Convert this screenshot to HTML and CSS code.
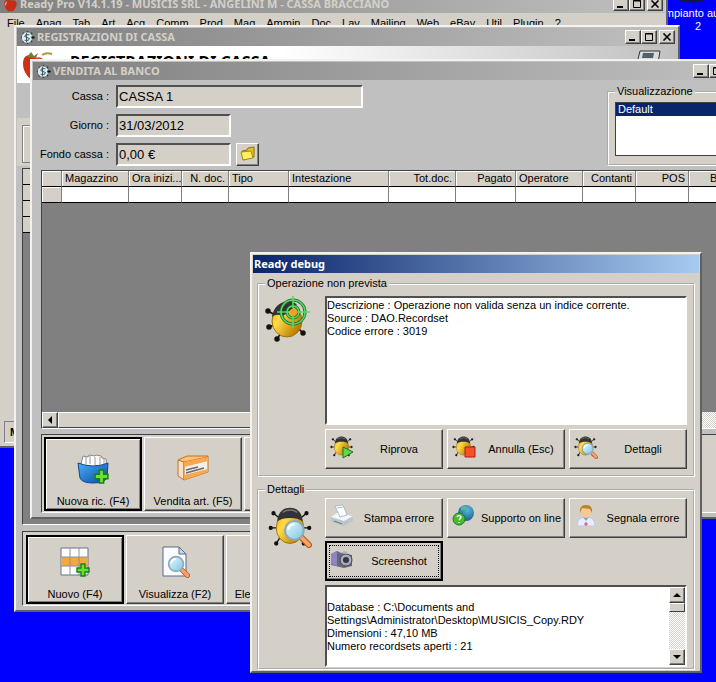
FILE: index.html
```html
<!DOCTYPE html>
<html lang="it">
<head>
  <meta charset="utf-8">
  <title>Ready Pro</title>
  <link rel="stylesheet" href="styles.css">
</head>
<body>
  <svg class="sprite" aria-hidden="true">
    <defs>
      <linearGradient id="shell" x1="0" y1="0" x2="1" y2="0.6">
        <stop offset="0" stop-color="#e8a808"/>
        <stop offset="0.35" stop-color="#ffdc48"/>
        <stop offset="1" stop-color="#b87800"/>
      </linearGradient>
      <linearGradient id="lens" x1="0" y1="0" x2="1" y2="1">
        <stop offset="0" stop-color="#e8faff"/>
        <stop offset="1" stop-color="#7cc4e4"/>
      </linearGradient>
      <linearGradient id="basket" x1="0" y1="0" x2="1" y2="1">
        <stop offset="0" stop-color="#4cb0f4"/>
        <stop offset="1" stop-color="#0448a8"/>
      </linearGradient>
      <radialGradient id="globe" cx="0.6" cy="0.3" r="0.8">
        <stop offset="0" stop-color="#58b8d8"/>
        <stop offset="1" stop-color="#10508c"/>
      </radialGradient>
    </defs>
    <symbol id="bug" viewBox="0 0 48 48">
      <g stroke="#111" stroke-width="1.5" fill="#111">
        <path d="M12 14L6 9M10 25H3M14 34L9 42M36 14L42 9M38 25H45M34 34L39 42" fill="none"/>
        <circle cx="6" cy="9" r="1.6"/><circle cx="3" cy="25" r="1.6"/><circle cx="9" cy="42" r="1.6"/>
        <circle cx="42" cy="9" r="1.6"/><circle cx="45" cy="25" r="1.6"/><circle cx="39" cy="42" r="1.6"/>
      </g>
      <ellipse cx="24" cy="25" rx="15" ry="17" fill="url(#shell)" stroke="#a07000"/>
      <path d="M10 18C11 7 17 3 24 3s13 4 14 15c-6-5-22-5-28 0z" fill="#333"/>
      <path d="M16 8q8-5 16 0" stroke="#777" stroke-width="1.5" fill="none"/>
    </symbol>
    <symbol id="glass" viewBox="0 0 28 28">
      <path d="M17 17L25 25" stroke="#b85818" stroke-width="6" stroke-linecap="round"/>
      <path d="M18 18L25 25" stroke="#f4a468" stroke-width="4" stroke-linecap="round"/>
      <circle cx="11" cy="11" r="9" fill="url(#lens)" stroke="#8fa8b4" stroke-width="2"/>
      <path d="M5 10a6 6 0 0 1 6-5" stroke="#fff" stroke-width="2" fill="none"/>
    </symbol>
    <symbol id="plus" viewBox="0 0 14 14">
      <path d="M5 1h4v4h4v4H9v4H5V9H1V5h4z" fill="#6ee030" stroke="#188018" stroke-width="1.4"/>
    </symbol>
    <symbol id="gear" viewBox="0 0 16 16">
      <path d="M8 1v14M1 8h15M3 3l10 10M13 3L3 13" stroke="#283c44" stroke-width="1.6"/>
      <circle cx="7.500" cy="8" r="5.500" fill="#dcf0f4"/>
      <path d="M10 5H6L5 7l5 2-1 2H5M7 3v10" fill="none" stroke="#384c54"/>
      <path d="M12 8h3" stroke="#111" stroke-width="2"/>
    </symbol>
    <symbol id="apple" viewBox="0 0 16 16">
      <path d="M8 4C2 1 0 6 2 10c2 5 4 6 6 5 2 1 4 0 6-5 2-5-1-8-6-6z" fill="#c82c18"/>
      <path d="M4 5q-2 2-1 4" stroke="#f09080" stroke-width="1.5" fill="none"/>
      <path d="M8 4q0-3 3-4" stroke="#486018" stroke-width="1.5" fill="none"/>
    </symbol>
    <symbol id="min" viewBox="0 0 10 8"><path d="M1 7h6" stroke="#000" stroke-width="2"/></symbol>
    <symbol id="max" viewBox="0 0 10 8"><path d="M1.500 0.500h7v7h-7zM1 1h8" fill="none" stroke="#000"/></symbol>
    <symbol id="close" viewBox="0 0 10 8"><path d="M1.500 0.500L8.500 7.500M8.500 0.500L1.500 7.500" stroke="#000" stroke-width="1.6"/></symbol>
  </svg>

  <div class="desktop">
    <div class="shortcut">
      <svg class="shortcut-icon" viewBox="0 0 32 12"><path d="M4 0h24v6q-12 3-24 0z" fill="#101840"/></svg>
      <span>mpianto au</span>
      <span>2</span>
    </div>

    <section class="window main-window">
      <header class="titlebar">
        <svg class="app-icon"><use href="#apple"/></svg>
        <h1 class="title">Ready Pro V14.1.19 - MUSICIS SRL - ANGELINI M - CASSA BRACCIANO</h1>
        <div class="window-buttons">
          <button aria-label="Riduci"><svg><use href="#min"/></svg></button>
          <button aria-label="Ingrandisci"><svg><use href="#max"/></svg></button>
          <button aria-label="Chiudi" class="close"><svg><use href="#close"/></svg></button>
        </div>
      </header>
      <nav class="menu">
        <a href="#">File</a><a href="#">Anag</a><a href="#">Tab</a><a href="#">Art</a><a href="#">Acq</a><a href="#">Comm</a><a href="#">Prod</a><a href="#">Mag</a><a href="#">Ammin</a><a href="#">Doc</a><a href="#">Lav</a><a href="#">Mailing</a><a href="#">Web</a><a href="#">eBay</a><a href="#">Util</a><a href="#">Plugin</a><a href="#">?</a>
      </nav>
      <footer class="statusbar">M</footer>
    </section>

    <section class="window register-window">
      <header class="titlebar">
        <svg class="app-icon"><use href="#gear"/></svg>
        <h2 class="title">REGISTRAZIONI DI CASSA</h2>
        <div class="window-buttons">
          <button aria-label="Riduci"><svg><use href="#min"/></svg></button>
          <button aria-label="Ingrandisci"><svg><use href="#max"/></svg></button>
          <button aria-label="Chiudi" class="close"><svg><use href="#close"/></svg></button>
        </div>
      </header>
      <div class="banner">
        <svg class="banner-logo" viewBox="0 0 32 32">
          <path d="M10 6C1 2-1 14 3 22c4 8 8 8 12 6V8z" fill="#cc3018"/>
          <path d="M13 8c8-3 12 4 10 12-2 8-8 12-14 9z" fill="#d85020"/>
          <path d="M5 7l4-5 3 4 4-3-2 5" fill="#708030"/>
          <path d="M20 5q4-3 10-1" stroke="#b09840" stroke-width="2" fill="none"/>
        </svg>
        <span class="banner-title">REGISTRAZIONI DI CASSA</span>
        <svg class="banner-register" viewBox="0 0 24 24">
          <path d="M3 1h20l-2 12H0z" fill="#d8dcdc" stroke="#333"/>
          <path d="M6 3h11l-1 5H5z" fill="#506068"/>
          <path d="M0 13h22v9H0z" fill="#999"/>
        </svg>
      </div>
      <div class="register-filter"><div class="filter-box"></div></div>
      <div class="register-grid">
        <div class="stub-row"></div><div class="stub-row"></div><div class="stub-row"></div><div class="stub-row"></div>
      </div>
      <div class="toolbar">
        <button class="tool default">
          <svg viewBox="0 0 32 32">
            <path d="M2 2h27v27H2z" fill="#fff" stroke="#667088"/>
            <path d="M2 11h27v9H2z" fill="#f8a838"/>
            <path d="M11 2v27M20 2v27M2 11h27M2 20h27" stroke="#8890a0"/>
            <use href="#plus" x="17" y="17" width="14" height="14"/>
          </svg>
          <span>Nuovo (F4)</span>
        </button>
        <button class="tool">
          <svg viewBox="0 0 32 32">
            <path d="M4 1h16l7 7v22H4z" fill="#fafcff" stroke="#56698c"/>
            <path d="M20 1v7h7z" fill="#c8d8ec" stroke="#56698c"/>
            <use href="#glass" x="8" y="9" width="23" height="23"/>
          </svg>
          <span>Visualizza (F2)</span>
        </button>
        <button class="tool"><span>Elenco mov (F3)</span></button>
      </div>
    </section>

    <section class="window sale-window">
      <header class="titlebar">
        <svg class="app-icon"><use href="#gear"/></svg>
        <h2 class="title">VENDITA AL BANCO</h2>
        <div class="window-buttons">
          <button aria-label="Riduci"><svg><use href="#min"/></svg></button>
          <button aria-label="Ingrandisci"><svg><use href="#max"/></svg></button>
          <button aria-label="Chiudi" class="close"><svg><use href="#close"/></svg></button>
        </div>
      </header>
      <div class="sale-head">
        <form class="sale-form">
          <label for="cassa">Cassa :</label>
          <input id="cassa" class="wide" type="text" value="CASSA 1">
          <label for="giorno">Giorno :</label>
          <input id="giorno" type="text" value="31/03/2012">
          <label for="fondo">Fondo cassa :</label>
          <div class="fund">
            <input id="fondo" type="text" value="0,00 €">
            <button type="button" class="folder" aria-label="Apri">
              <svg viewBox="0 0 16 16">
                <path d="M2 5l5-1 1-2 6-1v10L3 14z" fill="#e8c020" stroke="#907010"/>
                <path d="M1 6l10-1 2 7-10 2z" fill="#fff060" stroke="#a88818"/>
              </svg>
            </button>
          </div>
        </form>
        <fieldset class="group view-group">
          <legend>Visualizzazione</legend>
          <ul class="listbox"><li class="selected">Default</li></ul>
        </fieldset>
      </div>
      <div class="sale-grid">
        <table>
          <colgroup>
            <col class="w-mark"><col class="w-l"><col class="w-s"><col class="w-xs"><col class="w-m"><col class="w-xl"><col class="w-l"><col class="w-m"><col class="w-l"><col class="w-s"><col class="w-s"><col>
          </colgroup>
          <thead>
            <tr>
              <th></th><th>Magazzino</th><th>Ora inizi...</th><th class="num">N. doc.</th><th>Tipo</th><th>Intestazione</th><th class="num">Tot.doc.</th><th class="num">Pagato</th><th>Operatore</th><th class="num">Contanti</th><th class="num">POS</th><th class="num">Bonif</th>
            </tr>
          </thead>
          <tbody>
            <tr><th></th><td></td><td></td><td></td><td></td><td></td><td></td><td></td><td></td><td></td><td></td><td></td></tr>
          </tbody>
        </table>
        <div class="hscroll">
          <button aria-label="Scorri a sinistra"><svg viewBox="0 0 8 8"><path d="M6 0v8L2 4z"/></svg></button>
          <div class="thumb"></div>
          <div class="track"></div>
        </div>
      </div>
      <div class="toolbar">
        <button class="tool default">
          <svg viewBox="0 0 32 32">
            <path d="M4 11L6 3l5 1 1-2 6 1 1-1 5 1 1 2 4 1 1 8-14 4z" fill="#fff" stroke="#888"/>
            <path d="M9 4v8M13 3v8M18 4v8M23 4v8M27 6v6" stroke="#999"/>
            <path d="M1 10q15 6 30 0l-1 15q-3 5-14 5-11 0-13-5z" fill="url(#basket)" stroke="#104890"/>
            <use href="#plus" x="17" y="16" width="15" height="15"/>
          </svg>
          <span>Nuova ric. (F4)</span>
        </button>
        <button class="tool">
          <svg viewBox="0 0 32 32">
            <path d="M1 7l9-4h21l-1 5-24 3z" fill="#ffc078" stroke="#c87020"/>
            <path d="M1 7l6 2v18l-6-4z" fill="#f4e0c8" stroke="#c87020"/>
            <path d="M7 9l24-5v15L7 27z" fill="#f6efe6" stroke="#c87020"/>
            <path d="M7 22l24-6v3L7 27zM7 9l24-5v4L7 14z" fill="#f8a850"/>
            <path d="M9 17l12-3M9 20l18-5" stroke="#667" stroke-width="1.500"/>
          </svg>
          <span>Vendita art. (F5)</span>
        </button>
        <button class="tool" aria-label="Altro"></button>
      </div>
    </section>

    <section class="window dialog" role="dialog" aria-labelledby="dialog-title">
      <header class="titlebar active">
        <h2 class="title" id="dialog-title">Ready debug</h2>
      </header>
      <div class="dialog-body">
        <fieldset class="group">
          <legend>Operazione non prevista</legend>
          <div class="group-row">
            <svg class="big-icon" viewBox="0 0 48 48">
              <g stroke="#111" stroke-width="1.5" fill="#111">
                <path d="M10 19L3 15M9 29L4 31M16 37L12 43M33 32L38 37" fill="none"/>
                <circle cx="3" cy="15" r="2"/><circle cx="4" cy="31" r="2"/><circle cx="12" cy="43" r="2"/><circle cx="38" cy="37" r="2"/>
              </g>
              <ellipse cx="22" cy="25" rx="15" ry="16" fill="url(#shell)" stroke="#a07000"/>
              <path d="M7 21Q9 7 23 5q6 0 9 4L18 20q-7-3-11 1z" fill="#333"/>
              <g fill="none" stroke="#186828" stroke-width="3">
                <circle cx="28" cy="16" r="12"/><circle cx="28" cy="16" r="6"/>
              </g>
              <g fill="none" stroke="#58d868" stroke-width="1.600">
                <circle cx="28" cy="16" r="12"/><circle cx="28" cy="16" r="6"/>
                <path d="M28 0v12M28 20v12M12 16h12M32 16h13"/>
              </g>
              <circle cx="28" cy="16" r="3" fill="#f0a020"/>
            </svg>
            <div class="group-main">
              <textarea class="message" aria-label="Errore" readonly>Descrizione : Operazione non valida senza un indice corrente.
Source : DAO.Recordset
Codice errore : 3019</textarea>
              <div class="actions">
                <button class="action">
                  <svg viewBox="0 0 24 24">
                    <use href="#bug" width="23" height="23"/>
                    <path d="M13 12l10 5-10 6z" fill="#60d850" stroke="#187818"/>
                  </svg>
                  <span>Riprova</span>
                </button>
                <button class="action">
                  <svg viewBox="0 0 24 24">
                    <use href="#bug" width="23" height="23"/>
                    <path d="M13 12h10v10H13z" fill="#f85028" stroke="#a82010"/>
                  </svg>
                  <span>Annulla (Esc)</span>
                </button>
                <button class="action">
                  <svg viewBox="0 0 24 24">
                    <use href="#bug" width="23" height="23"/>
                    <use href="#glass" x="7" y="7" width="17" height="17"/>
                  </svg>
                  <span>Dettagli</span>
                </button>
              </div>
            </div>
          </div>
        </fieldset>

        <fieldset class="group">
          <legend>Dettagli</legend>
          <div class="group-row">
            <svg class="big-icon low" viewBox="0 0 48 48">
              <use href="#bug" x="3" y="1" width="44" height="44"/>
              <use href="#glass" x="18" y="15" width="29" height="29"/>
            </svg>
            <div class="group-main">
              <div class="actions">
                <button class="action">
                  <svg viewBox="0 0 24 24">
                    <path d="M1 13l6-4 16 3v5l-9 5-13-4z" fill="#bcc6ca"/>
                    <path d="M1 13l6-4 16 3-9 5z" fill="#f4f8f8"/>
                    <path d="M5 2l8-1 4 10-7 2z" fill="#fff" stroke="#a8bccc"/>
                    <path d="M7 4l6-1" stroke="#98c4e4"/>
                    <path d="M4 17l8 3" stroke="#677"/>
                  </svg>
                  <span>Stampa errore</span>
                </button>
                <button class="action">
                  <svg viewBox="0 0 24 24">
                    <circle cx="14" cy="9" r="8" fill="url(#globe)"/>
                    <path d="M9 3q4-2 6 0-2 4-6 3z" fill="#58b890"/>
                    <circle cx="7" cy="15" r="6" fill="#48b830" stroke="#188018"/>
                    <path d="M5 13q2-3 4 0 0 1-2 3M7 18v1" fill="none" stroke="#fff" stroke-width="1.600"/>
                  </svg>
                  <span>Supporto on line</span>
                </button>
                <button class="action">
                  <svg viewBox="0 0 24 24">
                    <path d="M3 22q0-9 9-9t9 9z" fill="#e8ecfc" stroke="#c0c8e8"/>
                    <path d="M9 13l3 4 3-4z" fill="#60a8e0"/>
                    <ellipse cx="12" cy="8" rx="5" ry="6" fill="#f8c890"/>
                    <path d="M6 9Q5 1 12 1t6 8l-2-4-8-1z" fill="#b88428"/>
                    <path d="M12 18v4M10 20h4" stroke="#e04060"/>
                  </svg>
                  <span>Segnala errore</span>
                </button>
                <button class="action focused">
                  <svg viewBox="0 0 24 24">
                    <path d="M1 7l6-3 4 2 11 2v11l-8 2-13-3z" fill="#686878"/>
                    <path d="M1 7l6-3v15l-6-2z" fill="#9084c0"/>
                    <circle cx="16" cy="13" r="6" fill="#a8acb8" stroke="#484858"/>
                    <circle cx="16" cy="13" r="3" fill="#303848"/>
                    <path d="M10 6l5-2 4 3" fill="#b0b0c0"/>
                  </svg>
                  <span>Screenshot</span>
                </button>
              </div>
              <div class="details">
                <textarea aria-label="Dettagli errore" readonly>

Database : C:\Documents and
Settings\Administrator\Desktop\MUSICIS_Copy.RDY
Dimensioni : 47,10 MB
Numero recordsets aperti : 21</textarea>
                <div class="vscroll">
                  <button aria-label="Scorri su"><svg viewBox="0 0 8 8"><path d="M0 6h8L4 2z"/></svg></button>
                  <div class="thumb"></div>
                  <div class="track"></div>
                  <button aria-label="Scorri giù"><svg viewBox="0 0 8 8"><path d="M0 2h8L4 6z"/></svg></button>
                </div>
              </div>
            </div>
          </div>
        </fieldset>
      </div>
    </section>
  </div>
</body>
</html>
```
FILE: styles.css
```css
* {
  box-sizing: border-box;
}

body {
  margin: 0;
  font-family: "Liberation Sans", Arial, sans-serif;
  font-size: 11px;
  line-height: 13px;
  color: #000;
}

button,
input,
textarea {
  font: inherit;
  color: inherit;
  margin: 0;
  border-radius: 0;
}

.sprite {
  position: absolute;
  width: 0;
  height: 0;
}

.desktop {
  position: relative;
  height: 100vh;
  min-height: 640px;
  background: #0000fe;
  overflow: hidden;
}

.shortcut {
  position: absolute;
  top: -5px;
  right: 0;
  width: 48px;
  display: flex;
  flex-direction: column;
  align-items: center;
  color: #fff;
  white-space: nowrap;
}

.shortcut-icon {
  width: 32px;
  height: 12px;
}

.shortcut span:last-child {
  padding-left: 12px;
}

/* windows */
.window {
  position: absolute;
  display: flex;
  flex-direction: column;
  padding: 1px;
  background: #d4d0c8;
  border: 2px solid;
  border-color: #f4f2ee #606060 #606060 #f4f2ee;
}

.main-window {
  top: -8px;
  left: -3px;
  right: 48px;
  bottom: 234px;
}

.register-window {
  top: 25px;
  left: 14px;
  right: 36px;
  bottom: 70px;
  background: #c0c0c0;
}

.sale-window {
  top: 59px;
  left: 30px;
  right: -32px;
  bottom: 163px;
  background: #c0c0c0;
}

.dialog {
  top: 252px;
  left: 250px;
  right: 14px;
}

.titlebar {
  display: flex;
  align-items: center;
  gap: 2px;
  height: 18px;
  flex: none;
  padding: 0 2px 0 3px;
  background: linear-gradient(to right, #808080, #c0c0c0);
  color: #d4d0c8;
}

.titlebar.active {
  padding-left: 1px;
  background: linear-gradient(to right, #0a246a, #a6caf0);
  color: #fff;
}

.title {
  margin: 0;
  flex: 1;
  font-family: "Noto Sans", Tahoma, sans-serif;
  font-size: 11px;
  font-weight: bold;
  line-height: 16px;
  white-space: nowrap;
}

.app-icon {
  width: 15px;
  height: 15px;
}

.window-buttons {
  display: flex;
}

.window-buttons button {
  display: flex;
  align-items: center;
  justify-content: center;
  width: 16px;
  height: 14px;
  padding: 0;
}

.window-buttons svg {
  width: 10px;
  height: 8px;
}

.window-buttons .close {
  margin-left: 2px;
}

button {
  background: #d4d0c8;
  border: 1px solid;
  border-color: #fff #404040 #404040 #fff;
  box-shadow: inset -1px -1px 0 #808080;
}

.menu {
  display: flex;
  gap: 11px;
  padding: 4px 7px;
  white-space: nowrap;
}

.menu a {
  color: #000;
  text-decoration: none;
}

.statusbar {
  margin: auto 4px 2px;
  height: 22px;
  padding: 4px 5px;
  border: 1px solid;
  border-color: #808080 #fff #fff #808080;
  font-weight: bold;
}

/* cash register list */
.banner {
  display: flex;
  align-items: flex-start;
  gap: 16px;
  height: 37px;
  flex: none;
  padding: 4px 16px 0 5px;
  background: linear-gradient(to right, #fff 40%, #c0c0c0);
  overflow: hidden;
}

.banner-logo {
  width: 32px;
  height: 32px;
}

.banner-title {
  flex: 1;
  padding-top: 2px;
  font-family: "Noto Sans", Tahoma, sans-serif;
  font-size: 16px;
  font-weight: bold;
  line-height: 20px;
}

.banner-register {
  width: 24px;
  height: 24px;
}

.register-filter {
  margin-top: 35px;
  padding: 7px 5px 3px;
  background: #d4d0c8;
}

.filter-box {
  height: 38px;
  border: 1px solid #808080;
  box-shadow: inset 1px 1px 0 #fff;
}

.register-grid {
  flex: 1;
  margin: 2px 5px 6px;
  background: #808080;
  border: 1px solid;
  border-color: #404040 #fff #fff #404040;
}

.stub-row {
  height: 16px;
  background: #d4d0c8;
  border-bottom: 1px solid #000;
}

.toolbar {
  display: flex;
  gap: 2px;
  margin: 0 5px 3px;
  padding: 3px 3px 1px;
  background: #d4d0c8;
  border: 1px solid;
  border-color: #404040 #fff #fff #404040;
}

.tool {
  display: flex;
  flex-direction: column;
  align-items: center;
  justify-content: flex-end;
  width: 98px;
  height: 69px;
  padding: 0 0 2px;
  gap: 10px;
  overflow: hidden;
  white-space: nowrap;
}

.tool svg {
  width: 32px;
  height: 32px;
}

.tool.default {
  padding-bottom: 1px;
  border: 2px solid #000;
  box-shadow: inset 1px 1px 0 #fff, inset -1px -1px 0 #808080;
}

/* counter sale */
.sale-head {
  display: flex;
  justify-content: space-between;
  padding: 5px 0 4px 5px;
}

.sale-form {
  display: grid;
  grid-template-columns: 71px auto;
  grid-auto-rows: 23px;
  gap: 6px 7px;
  align-items: center;
  justify-items: start;
}

.sale-form label {
  justify-self: end;
  white-space: nowrap;
}

.sale-form input {
  width: 115px;
  height: 23px;
  padding: 0 1px;
  font-size: 13px;
  background: #d4d0c8;
  border: 2px solid;
  border-color: #505050 #fff #fff #505050;
}

.sale-form .wide {
  width: 247px;
}

.fund {
  display: flex;
  gap: 5px;
}

.folder {
  width: 23px;
  height: 23px;
  padding: 2px;
}

.folder svg {
  width: 16px;
  height: 16px;
}

.group {
  min-width: 0;
  margin: 0;
  padding: 0 6px 6px;
  border: 2px groove #fff;
}

.group legend {
  padding: 0 2px;
}

.view-group {
  width: 138px;
  background: #d4d0c8;
}

.listbox {
  height: 54px;
  margin: 4px 0 0;
  padding: 0;
  list-style: none;
  background: #fff;
  border: 1px solid #404040;
}

.listbox .selected {
  padding: 0 2px;
  background: #0a246a;
  color: #fff;
}

.sale-grid {
  flex: 1;
  display: flex;
  flex-direction: column;
  justify-content: space-between;
  margin: 0 5px 5px 8px;
  background: #808080;
  border: 1px solid;
  border-color: #404040 #fff #fff #404040;
  overflow: hidden;
}

.sale-window .toolbar {
  margin-left: 8px;
  padding: 2px 2px 1px;
}

.sale-window .tool {
  height: 74px;
}

.sale-grid table {
  width: 100%;
  table-layout: fixed;
  border-collapse: separate;
  border-spacing: 0;
}

.sale-grid th,
.sale-grid td {
  height: 16px;
  padding: 0 3px;
  font-weight: normal;
  text-align: left;
  white-space: nowrap;
  overflow: hidden;
  border-right: 1px solid #808080;
  border-bottom: 1px solid #000;
}

.sale-grid th {
  background: #d4d0c8;
  box-shadow: inset 1px 1px 0 #fff;
}

.sale-grid td {
  background: #fff;
}

.sale-grid .num {
  text-align: right;
}

.w-mark { width: 20px; }
.w-xs { width: 47px; }
.w-s { width: 53px; }
.w-m { width: 60px; }
.w-l { width: 67px; }
.w-xl { width: 100px; }

/* scrollbars */
.hscroll,
.vscroll {
  display: flex;
  flex: none;
}

.vscroll {
  flex-direction: column;
  width: 16px;
}

.hscroll button,
.vscroll button {
  display: flex;
  align-items: center;
  justify-content: center;
  width: 16px;
  height: 16px;
  padding: 0;
}

.hscroll svg,
.vscroll svg {
  width: 8px;
  height: 8px;
}

.thumb {
  background: #d4d0c8;
  border: 1px solid;
  border-color: #fff #404040 #404040 #fff;
}

.hscroll .thumb {
  width: 580px;
}

.vscroll .thumb {
  height: 9px;
}

.track {
  flex: 1;
  background: repeating-conic-gradient(#fff 0 25%, #d4d0c8 0 50%) 0 0 / 2px 2px;
}

/* debug dialog */
.dialog-body {
  display: flex;
  flex-direction: column;
  gap: 6px;
  padding: 4px 4px 0;
}

.group-row {
  display: flex;
  gap: 12px;
  padding-top: 6px;
}

.dialog .group {
  padding-bottom: 6px;
}

.dialog .group + .group {
  padding-bottom: 1px;
}

.dialog .group + .group .group-row {
  padding-top: 2px;
}

.big-icon {
  width: 48px;
  height: 48px;
  flex: none;
}

.big-icon.low {
  margin-top: 6px;
}

.group-main {
  flex: 1;
  display: flex;
  flex-direction: column;
  gap: 4px;
}

textarea {
  display: block;
  resize: none;
  overflow: hidden;
  background: #fff;
  border: 0;
  outline: none;
}

.message,
.details {
  border: 2px solid;
  border-color: #505050 #fff #fff #505050;
}

.message {
  height: 129px;
  padding: 1px 0;
}

.actions {
  display: grid;
  grid-template-columns: repeat(3, 1fr);
  gap: 3px 4px;
}

.action {
  display: flex;
  align-items: center;
  height: 40px;
  padding: 0 2px 0 4px;
  white-space: nowrap;
}

.action svg {
  width: 24px;
  height: 24px;
  margin-bottom: 4px;
}

.action span {
  flex: 1;
  padding-left: 4px;
}

.action.focused {
  border: 2px solid #000;
  padding: 0 1px 0 3px;
  outline: 1px dotted #000;
  outline-offset: -5px;
}

.details {
  display: flex;
  height: 82px;
  background: #fff;
}

.details textarea {
  flex: 1;
  padding: 1px 0;
}
```
